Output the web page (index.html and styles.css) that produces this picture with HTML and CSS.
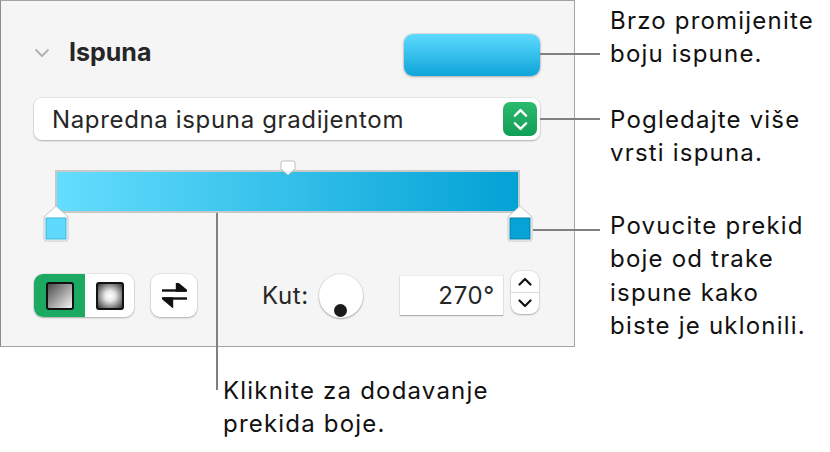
FILE: index.html
```html
<!DOCTYPE html>
<html lang="hr">
<head>
  <meta charset="UTF-8" />
  <title>Ispuna</title>
  <link rel="stylesheet" href="styles.css">
</head>
<body>
  <div class="figure">
    <div class="top">
      <section class="panel">
        <div class="panel-head">
          <svg class="chevron" viewBox="0 0 16 10"><polyline points="1.5,1.5 8,8 14.5,1.5" /></svg>
          <h3>Ispuna</h3>
          <div class="swatch"></div>
        </div>

        <div class="select">
          <span>Napredna ispuna gradijentom</span>
          <span class="select-btn">
            <svg viewBox="0 0 16 26"><polyline points="2,9 8,3 14,9" /><polyline points="2,17 8,23 14,17" /></svg>
          </span>
        </div>

        <div class="gradient">
          <svg class="midpoint" viewBox="0 0 16 16"><path d="M1 3 Q1 1 3 1 H13 Q15 1 15 3 V9 L8 15 L1 9 Z" /></svg>
          <svg class="stop stop-left" viewBox="0 0 26 37">
            <path d="M1 12 L13 1 L25 12 V34 Q25 36 23 36 H3 Q1 36 1 34 Z" />
            <rect x="3" y="13" width="20" height="21" />
          </svg>
          <svg class="stop stop-right" viewBox="0 0 26 37">
            <path d="M1 12 L13 1 L25 12 V34 Q25 36 23 36 H3 Q1 36 1 34 Z" />
            <rect x="3" y="13" width="20" height="21" />
          </svg>
        </div>

        <div class="controls">
          <div class="segmented">
            <span class="seg seg-on"><i class="fill-icon linear"></i></span>
            <span class="seg"><i class="fill-icon radial"></i></span>
          </div>
          <div class="swap">
            <svg viewBox="0 0 25 25">
              <line x1="0" y1="7.5" x2="24" y2="7.5" />
              <polygon points="15,0 24,7.5 15,7.5" />
              <line x1="1" y1="15.5" x2="25" y2="15.5" />
              <polygon points="1,15.5 10,15.5 10,23" />
            </svg>
          </div>
          <span class="kut">Kut:</span>
          <div class="knob"><span class="dot"></span></div>
          <div class="angle">270°</div>
          <div class="stepper">
            <span><svg viewBox="0 0 14 9"><polyline points="1.5,7.5 7,2 12.5,7.5" /></svg></span>
            <span><svg viewBox="0 0 14 9"><polyline points="1.5,1.5 7,7 12.5,1.5" /></svg></span>
          </div>
        </div>
      </section>

      <div class="notes">
        <p class="note note-color">Brzo promijenite<br>boju ispune.</p>
        <p class="note note-type">Pogledajte više<br>vrsti ispuna.</p>
        <p class="note note-stop">Povucite prekid<br>boje od trake<br>ispune kako<br>biste je uklonili.</p>
      </div>
    </div>

    <p class="note note-add">Kliknite za dodavanje<br>prekida boje.</p>
  </div>
</body>
</html>
```

FILE: styles.css
```css
* {
  margin: 0;
  padding: 0;
  box-sizing: border-box;
}

body {
  background: #fff;
  font-family: Inter, "Liberation Sans", sans-serif;
  color: #1d1d1f;
  font-size: 24px;
  letter-spacing: 1.2px;
}

.top {
  display: flex;
}

/* Inspector panel */
.panel {
  width: 575px;
  height: 347px;
  background: #f5f5f5;
  border: 1px solid #a3a3a3;
  border-left-color: #8c8c8c;
  padding: 33px 34px 0 33px;
  letter-spacing: 0.65px;
}

.panel-head {
  display: flex;
  align-items: center;
  height: 42px;
}

.chevron {
  width: 16px;
  height: 10px;
  margin-top: -4px;
  fill: none;
  stroke: #b3b3b3;
  stroke-width: 2;
}

.panel-head h3 {
  font-size: 25px;
  font-weight: 700;
  letter-spacing: 0;
  color: #262626;
  margin: -6px 0 0 19px;
}

.swatch {
  margin-left: auto;
  width: 136px;
  height: 42px;
  border-radius: 9px;
  background: linear-gradient(#5ddafe, #0fa4d9);
  box-shadow: 0 0 0 1px rgba(0, 0, 0, 0.07), 0 1px 3px rgba(0, 0, 0, 0.25);
}

.select {
  margin-top: 22px;
  height: 42px;
  display: flex;
  align-items: center;
  padding: 0 3px 0 18px;
  background: #fff;
  border-radius: 8px;
  color: #262626;
  box-shadow: 0 0 0 1px rgba(0, 0, 0, 0.05), 0 1px 2px rgba(0, 0, 0, 0.25);
}

.select-btn {
  margin-left: auto;
  width: 34px;
  height: 34px;
  border-radius: 7px;
  background: linear-gradient(#2cba6e, #109f56);
  display: flex;
  align-items: center;
  justify-content: center;
}

.select-btn svg {
  width: 15px;
  height: 25px;
  fill: none;
  stroke: #fff;
  stroke-width: 2.6;
  stroke-linecap: round;
  stroke-linejoin: round;
}

/* Gradient bar with its stops */
.gradient {
  position: relative;
  margin: 30px 20px 61px 21px;
  height: 43px;
  border: 2px solid #c8c8c8;
  background: linear-gradient(to right, #64ddfe, #03a2d5);
}

.midpoint {
  position: absolute;
  left: 50%;
  top: -12px;
  width: 16px;
  height: 16px;
  margin-left: -8px;
  fill: #fff;
  stroke: #bdbdbd;
}

.stop {
  position: absolute;
  top: 33px;
  width: 26px;
  height: 37px;
}

.stop path {
  fill: #fff;
  stroke: #c6c6c6;
}

.stop-left {
  left: -14px;
}

.stop-left rect {
  fill: #5fdafe;
  stroke: #3bb3d6;
}

.stop-right {
  right: -15px;
}

.stop-right rect {
  fill: #07a2d6;
  stroke: #0b7fa8;
}

/* Bottom row */
.controls {
  display: flex;
  align-items: center;
  height: 43px;
}

.segmented {
  width: 100px;
  height: 43px;
  display: flex;
  border-radius: 9px;
  overflow: hidden;
  background: #fff;
  box-shadow: 0 0 0 1px rgba(0, 0, 0, 0.05), 0 1px 2px rgba(0, 0, 0, 0.25);
}

.seg {
  flex: 1;
  display: flex;
  align-items: center;
  justify-content: center;
}

.seg-on {
  flex: 0 0 51px;
  background: #1caa63;
}

.fill-icon {
  width: 28px;
  height: 28px;
  border: 2.5px solid #111;
  border-radius: 3px;
}

.linear {
  background: linear-gradient(135deg, #4a4a4a, #f4f4f4);
}

.radial {
  background: radial-gradient(circle, #fff 0%, #e6e6e6 30%, #333 100%);
}

.swap {
  margin-left: 17px;
  width: 46px;
  height: 43px;
  border-radius: 9px;
  background: #fff;
  display: flex;
  align-items: center;
  justify-content: center;
  box-shadow: 0 0 0 1px rgba(0, 0, 0, 0.05), 0 1px 2px rgba(0, 0, 0, 0.25);
}

.swap svg {
  width: 25px;
  height: 25px;
  stroke: #111;
  stroke-width: 2.4;
  fill: #111;
}

.kut {
  margin-left: 65px;
  color: #262626;
}

.knob {
  margin-left: 10px;
  width: 44px;
  height: 44px;
  border-radius: 50%;
  background: #fff;
  display: flex;
  align-items: flex-end;
  justify-content: center;
  padding-bottom: 1px;
  box-shadow: 0 0 0 1px rgba(0, 0, 0, 0.05), 0 1px 2px rgba(0, 0, 0, 0.3);
}

.dot {
  width: 13px;
  height: 13px;
  border-radius: 50%;
  background: #1b1b1b;
}

.angle {
  margin-left: 37px;
  width: 103px;
  height: 39px;
  background: #fff;
  text-align: right;
  padding-right: 8px;
  line-height: 39px;
  color: #262626;
  box-shadow: 0 0 0 1px rgba(0, 0, 0, 0.04), 0 1px 1px rgba(0, 0, 0, 0.25);
}

.stepper {
  margin: -6px 0 0 8px;
  width: 28px;
  height: 43px;
  border-radius: 9px;
  background: #fff;
  display: flex;
  flex-direction: column;
  box-shadow: 0 0 0 1px rgba(0, 0, 0, 0.05), 0 1px 2px rgba(0, 0, 0, 0.25);
}

.stepper span {
  flex: 1;
  display: flex;
  align-items: center;
  justify-content: center;
}

.stepper span + span {
  border-top: 1px solid #dcdcdc;
}

.stepper svg {
  width: 14px;
  height: 9px;
  fill: none;
  stroke: #111;
  stroke-width: 2.2;
  stroke-linecap: round;
  stroke-linejoin: round;
}

/* Callouts */
.notes {
  padding-left: 35px;
}

.note {
  position: relative;
  line-height: 33.3px;
  color: #111;
}

.note::before {
  content: "";
  position: absolute;
  background: #808080;
  height: 2px;
}

.note-color {
  margin-top: 4px;
}

.note-color::before {
  left: -70px;
  width: 60px;
  top: 49px;
}

.note-type {
  margin-top: 32px;
}

.note-type::before {
  left: -70px;
  width: 60px;
  top: 15px;
}

.note-stop {
  margin-top: 40px;
}

.note-stop::before {
  left: -77px;
  width: 67px;
  top: 20px;
}

.note-add {
  margin: 27px 0 0 223px;
}

.note-add::before {
  left: -7px;
  top: -161px;
  width: 2px;
  height: 177px;
}
```
